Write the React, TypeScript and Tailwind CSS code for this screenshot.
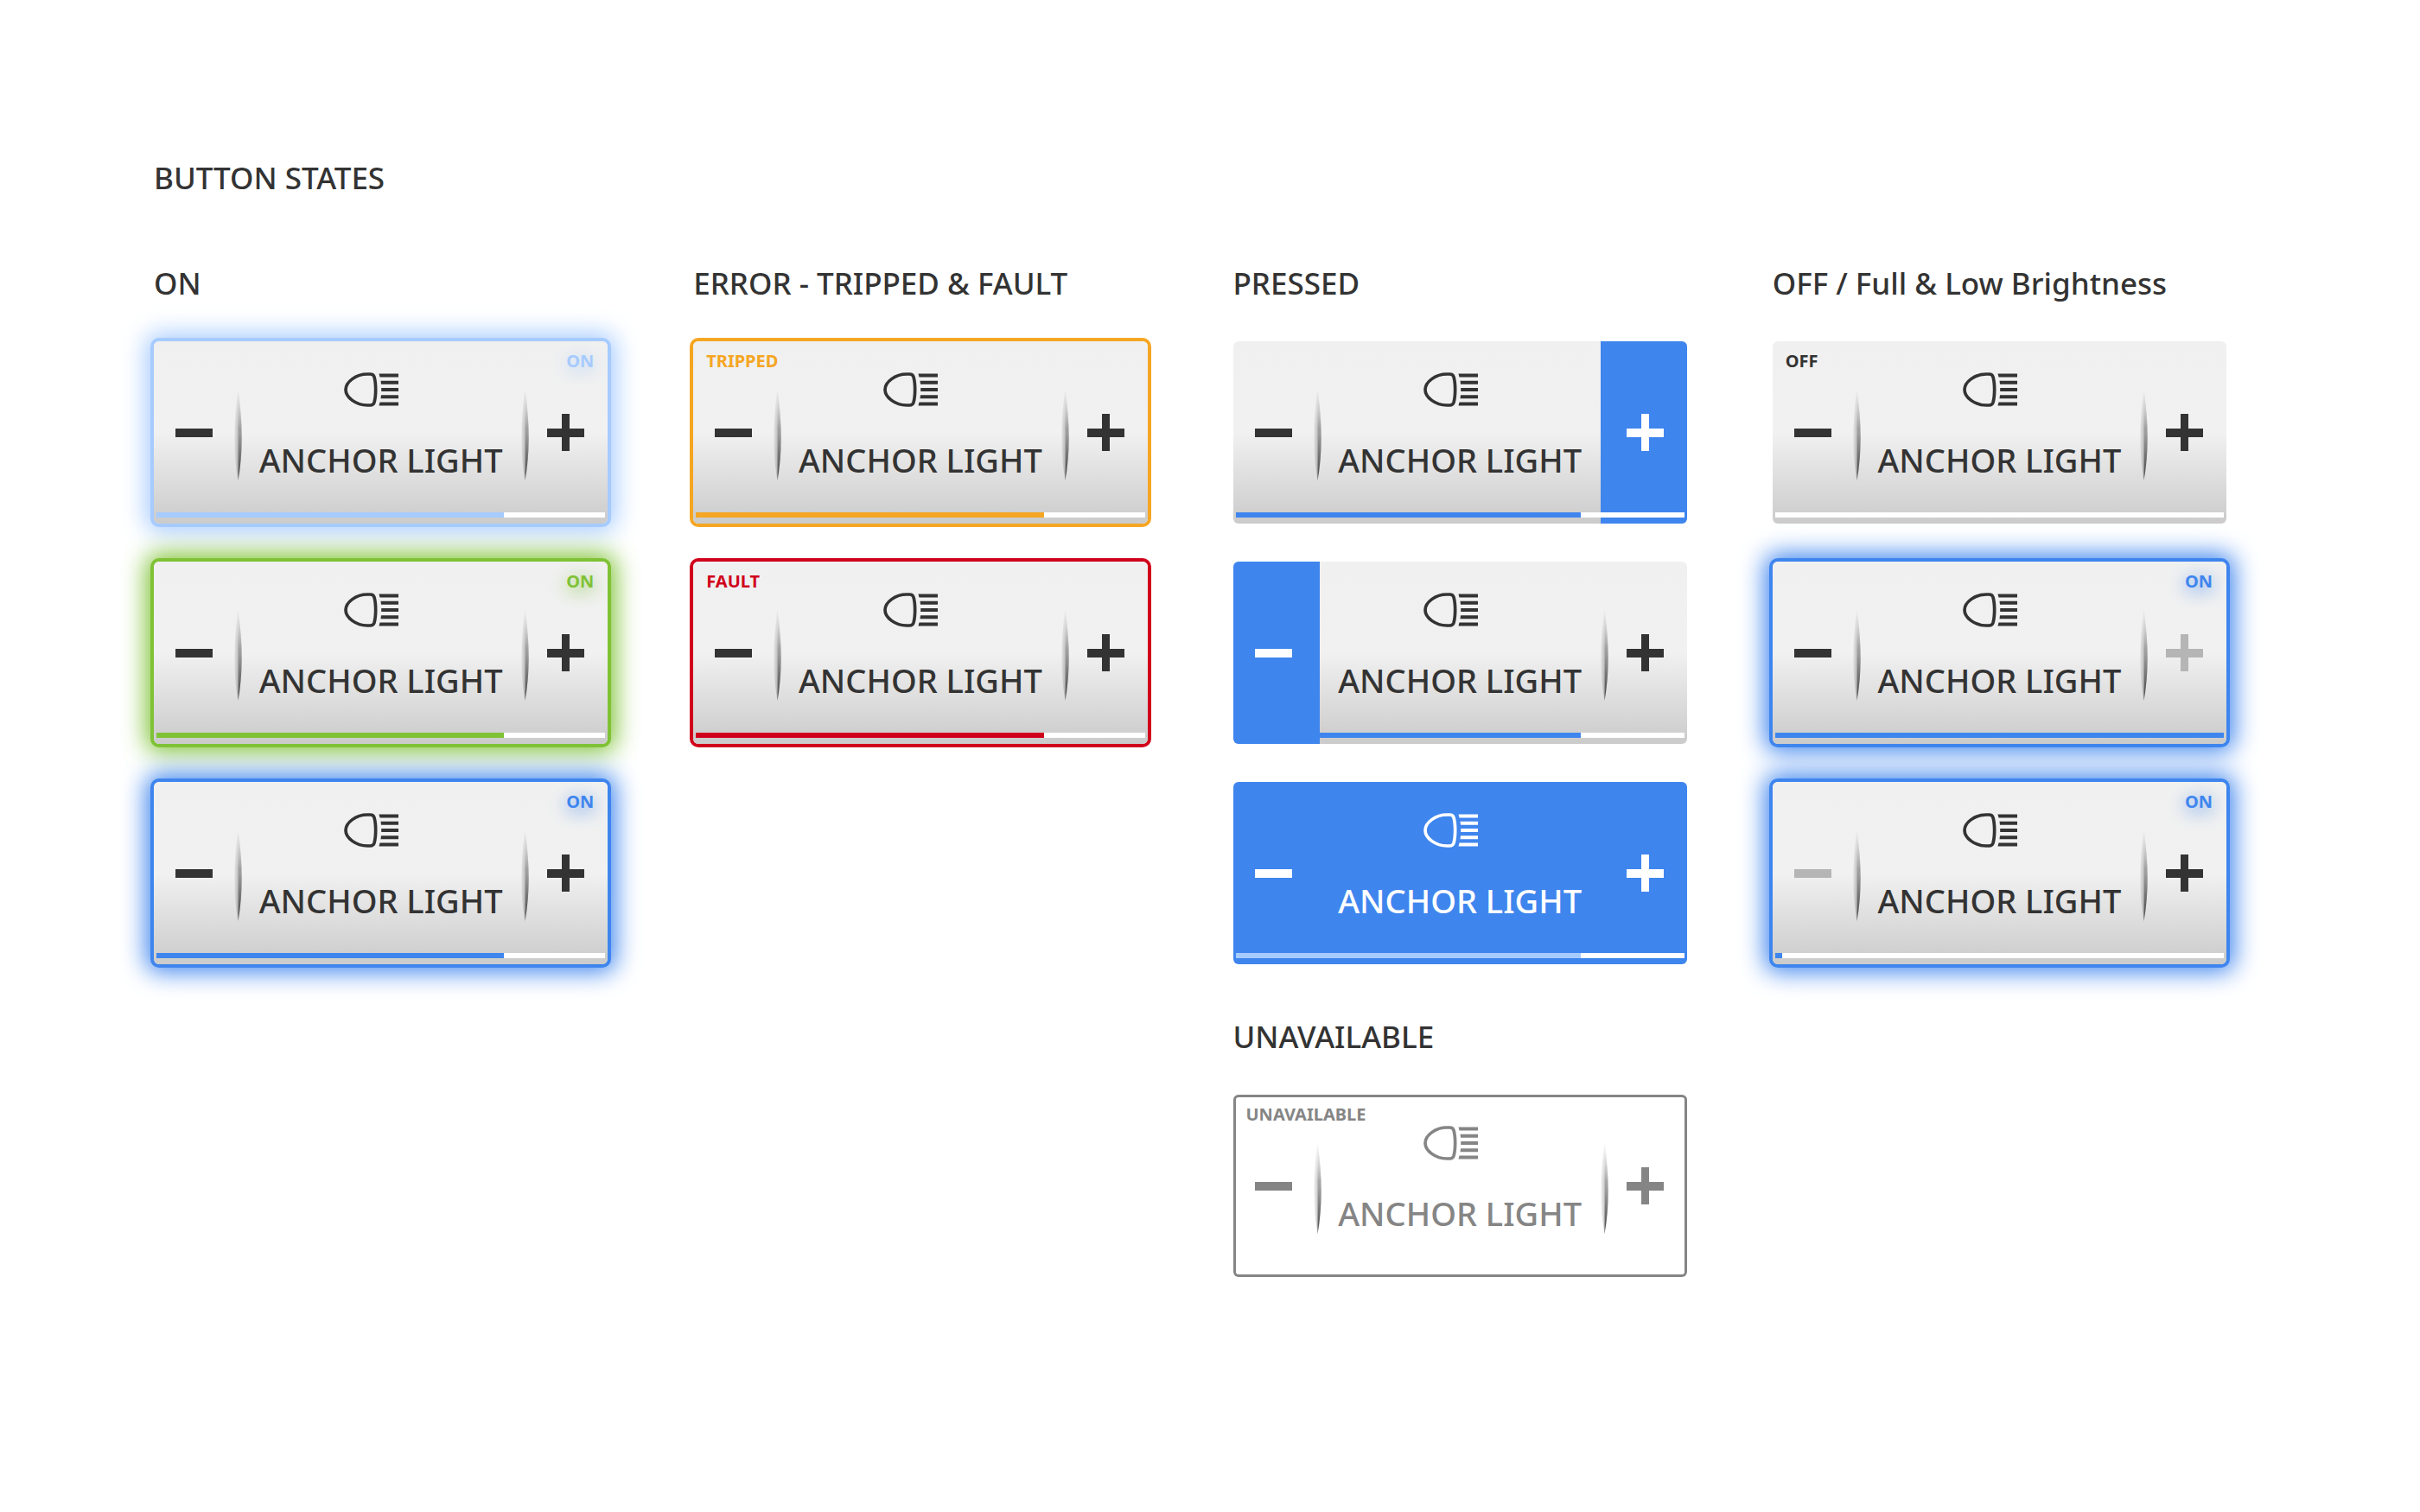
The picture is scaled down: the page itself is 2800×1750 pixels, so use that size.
import type { ReactNode } from 'react'

type Tone = 'sky' | 'green' | 'blue' | 'orange' | 'red' | 'none' | 'outline'

const frames: Record<Tone, string> = {
  sky: 'shadow-[0_0_0_4px_#a6cbff,0_0_28px_9px_#a6cbff]',
  green: 'shadow-[0_0_0_4px_#7fc236,0_0_28px_9px_#7fc236]',
  blue: 'shadow-[0_0_0_4px_#3f85ee,0_0_28px_9px_#3f85ee]',
  orange: 'shadow-[0_0_0_4px_#f5a623]',
  red: 'shadow-[0_0_0_4px_#d0021b]',
  none: '',
  outline: 'shadow-[inset_0_0_0_3px_#858585]',
}

const labels: Record<Tone, string> = {
  sky: 'text-[#a6cbff] [text-shadow:0_4px_20px_#a6cbff]',
  green: 'text-[#7fc236] [text-shadow:0_4px_20px_#7fc236]',
  blue: 'text-[#3f85ee] [text-shadow:0_4px_20px_#3f85ee]',
  orange: 'text-[#f5a623]',
  red: 'text-[#d0021b]',
  none: 'text-[#333333]',
  outline: 'text-[#858585]',
}

const fills: Record<Tone, string> = {
  sky: 'bg-[#a6cbff]',
  green: 'bg-[#7fc236]',
  blue: 'bg-[#3f85ee]',
  orange: 'bg-[#f5a623]',
  red: 'bg-[#d0021b]',
  none: 'bg-[#3f85ee]',
  outline: '',
}

function HeadlampIcon() {
  return (
    <svg viewBox="0 0 85 40" className="h-10 w-[85px]" fill="none" aria-hidden="true">
      <path
        d="M27 2H30.500C33 2 34.300 3 35 5.200C37.200 13 37.200 27 35 34.800C34.300 37 33 38 30.500 38H27C14 38 2 29 2 20S14 2 27 2Z"
        stroke="currentColor"
        strokeWidth="3.700"
      />
      <path
        d="M40.500 1.500H63V5.500H41.500ZM42.500 9.800H63V13.800H43ZM43.200 18H63V22H43.200ZM43 26.200H63V30.200H42.500ZM41.500 34.500H63V38.500H40.500Z"
        fill="currentColor"
      />
    </svg>
  )
}

function Minus() {
  return (
    <svg viewBox="0 0 43 43" className="size-[43px]" aria-hidden="true">
      <path d="M0 17H43V27H0Z" fill="currentColor" />
    </svg>
  )
}

function Plus() {
  return (
    <svg viewBox="0 0 43 43" className="size-[43px]" aria-hidden="true">
      <path d="M0 17H17V0H26V17H43V27H26V43H17V27H0Z" fill="currentColor" />
    </svg>
  )
}

function Divider() {
  return (
    <svg
      viewBox="0 0 9 110"
      className="h-[110px] w-[9px] [mask-image:linear-gradient(transparent,black_45%)]"
      aria-hidden="true"
    >
      <path d="M4.500 4Q-4 64 4.500 110Z" fill="url(#divider-light)" />
      <path d="M4.500 4Q13 64 4.500 110Z" fill="url(#divider-dark)" />
    </svg>
  )
}

function DividerPaints() {
  return (
    <svg className="absolute size-0" aria-hidden="true">
      <defs>
        <linearGradient id="divider-light" x1="0" y1="0" x2="1" y2="0">
          <stop offset="0" stopColor="#000" stopOpacity="0.050" />
          <stop offset="1" stopColor="#000" stopOpacity="0.200" />
        </linearGradient>
        <linearGradient id="divider-dark" x1="0" y1="0" x2="0" y2="1">
          <stop offset="0" stopColor="#555" stopOpacity="0.300" />
          <stop offset="0.500" stopColor="#555" stopOpacity="0.550" />
          <stop offset="1" stopColor="#444" stopOpacity="1" />
        </linearGradient>
      </defs>
    </svg>
  )
}

type DimmerProps = {
  tone: Tone
  status?: string
  level?: number
  pressed?: 'minus' | 'plus' | 'all'
  dimmed?: 'minus' | 'plus'
}

function Dimmer({ tone, status, level, pressed, dimmed }: DimmerProps) {
  const all = pressed === 'all'
  const off = tone === 'outline'
  const surface = all
    ? 'bg-[#3f85ee] text-white'
    : off
      ? 'bg-white text-[#858585]'
      : 'bg-linear-to-b from-[#f0f0f0] via-[#f1f1f1] via-50% to-[#cbcbcb] text-[#333333]'
  const side = (name: 'minus' | 'plus') =>
    pressed === name ? 'bg-[#3f85ee] text-white' : dimmed === name ? 'text-[#b5b5b5]' : ''
  return (
    <div className={`relative h-[211px] rounded-[6px] ${surface} ${frames[tone]}`}>
      <div className="flex h-full">
        <button
          type="button"
          aria-label="Decrease brightness"
          disabled={off || dimmed === 'minus'}
          className={`flex w-[100px] shrink-0 items-center rounded-l-[6px] pl-[25px] ${side('minus')}`}
        >
          <Minus />
          {!all && pressed !== 'minus' && (
            <span className="-mr-0.5 ml-auto">
              <Divider />
            </span>
          )}
        </button>
        <button type="button" disabled={off} className="flex flex-1 flex-col items-center pt-9">
          <HeadlampIcon />
          <span className="mt-[35px] text-[38px] leading-[52px] font-medium whitespace-nowrap">ANCHOR LIGHT</span>
        </button>
        <button
          type="button"
          aria-label="Increase brightness"
          disabled={off || dimmed === 'plus'}
          className={`flex w-[100px] shrink-0 items-center justify-end rounded-r-[6px] pr-[27px] ${side('plus')}`}
        >
          {!all && pressed !== 'plus' && (
            <span className="mr-auto">
              <Divider />
            </span>
          )}
          <Plus />
        </button>
      </div>
      {status && (
        <span
          className={`absolute top-[9px] text-[20px] leading-7 font-bold ${status === 'ON' ? 'right-4' : 'left-[15px]'} ${labels[tone]}`}
        >
          {status}
        </span>
      )}
      {level !== undefined && (
        <div className="absolute inset-x-[3px] bottom-[7px] h-1.5 bg-white">
          <div className={`h-full ${all ? 'bg-[#a6cbff]' : fills[tone]}`} style={{ width: `${level}%` }} />
        </div>
      )}
    </div>
  )
}

function Group({ title, children }: { title: string; children: ReactNode }) {
  return (
    <section>
      <h2 className="text-[35px] leading-12 font-medium whitespace-nowrap">{title}</h2>
      <div className="mt-[43px] flex flex-col gap-11">{children}</div>
    </section>
  )
}

export default function App() {
  return (
    <main className="min-h-screen bg-white pt-[182px] pr-[224px] pb-20 pl-[178px] font-['Noto_Sans','Open_Sans',sans-serif] text-[#333333]">
      <DividerPaints />
      <h1 className="text-[35px] leading-12 font-medium">BUTTON STATES</h1>
      <div className="mt-[74px] grid grid-cols-4 gap-x-[99px]">
        <Group title="ON">
          <Dimmer tone="sky" status="ON" level={77.5} />
          <Dimmer tone="green" status="ON" level={77.5} />
          <Dimmer tone="blue" status="ON" level={77.5} />
        </Group>
        <Group title="ERROR - TRIPPED &amp; FAULT">
          <Dimmer tone="orange" status="TRIPPED" level={77.5} />
          <Dimmer tone="red" status="FAULT" level={77.5} />
        </Group>
        <div className="flex flex-col gap-[60px]">
          <Group title="PRESSED">
            <Dimmer tone="none" level={77} pressed="plus" />
            <Dimmer tone="none" level={77} pressed="minus" />
            <Dimmer tone="none" level={77} pressed="all" />
          </Group>
          <Group title="UNAVAILABLE">
            <Dimmer tone="outline" status="UNAVAILABLE" />
          </Group>
        </div>
        <Group title="OFF / Full &amp; Low Brightness">
          <Dimmer tone="none" status="OFF" level={0} />
          <Dimmer tone="blue" status="ON" level={100} dimmed="plus" />
          <Dimmer tone="blue" status="ON" level={1.5} dimmed="minus" />
        </Group>
      </div>
    </main>
  )
}
